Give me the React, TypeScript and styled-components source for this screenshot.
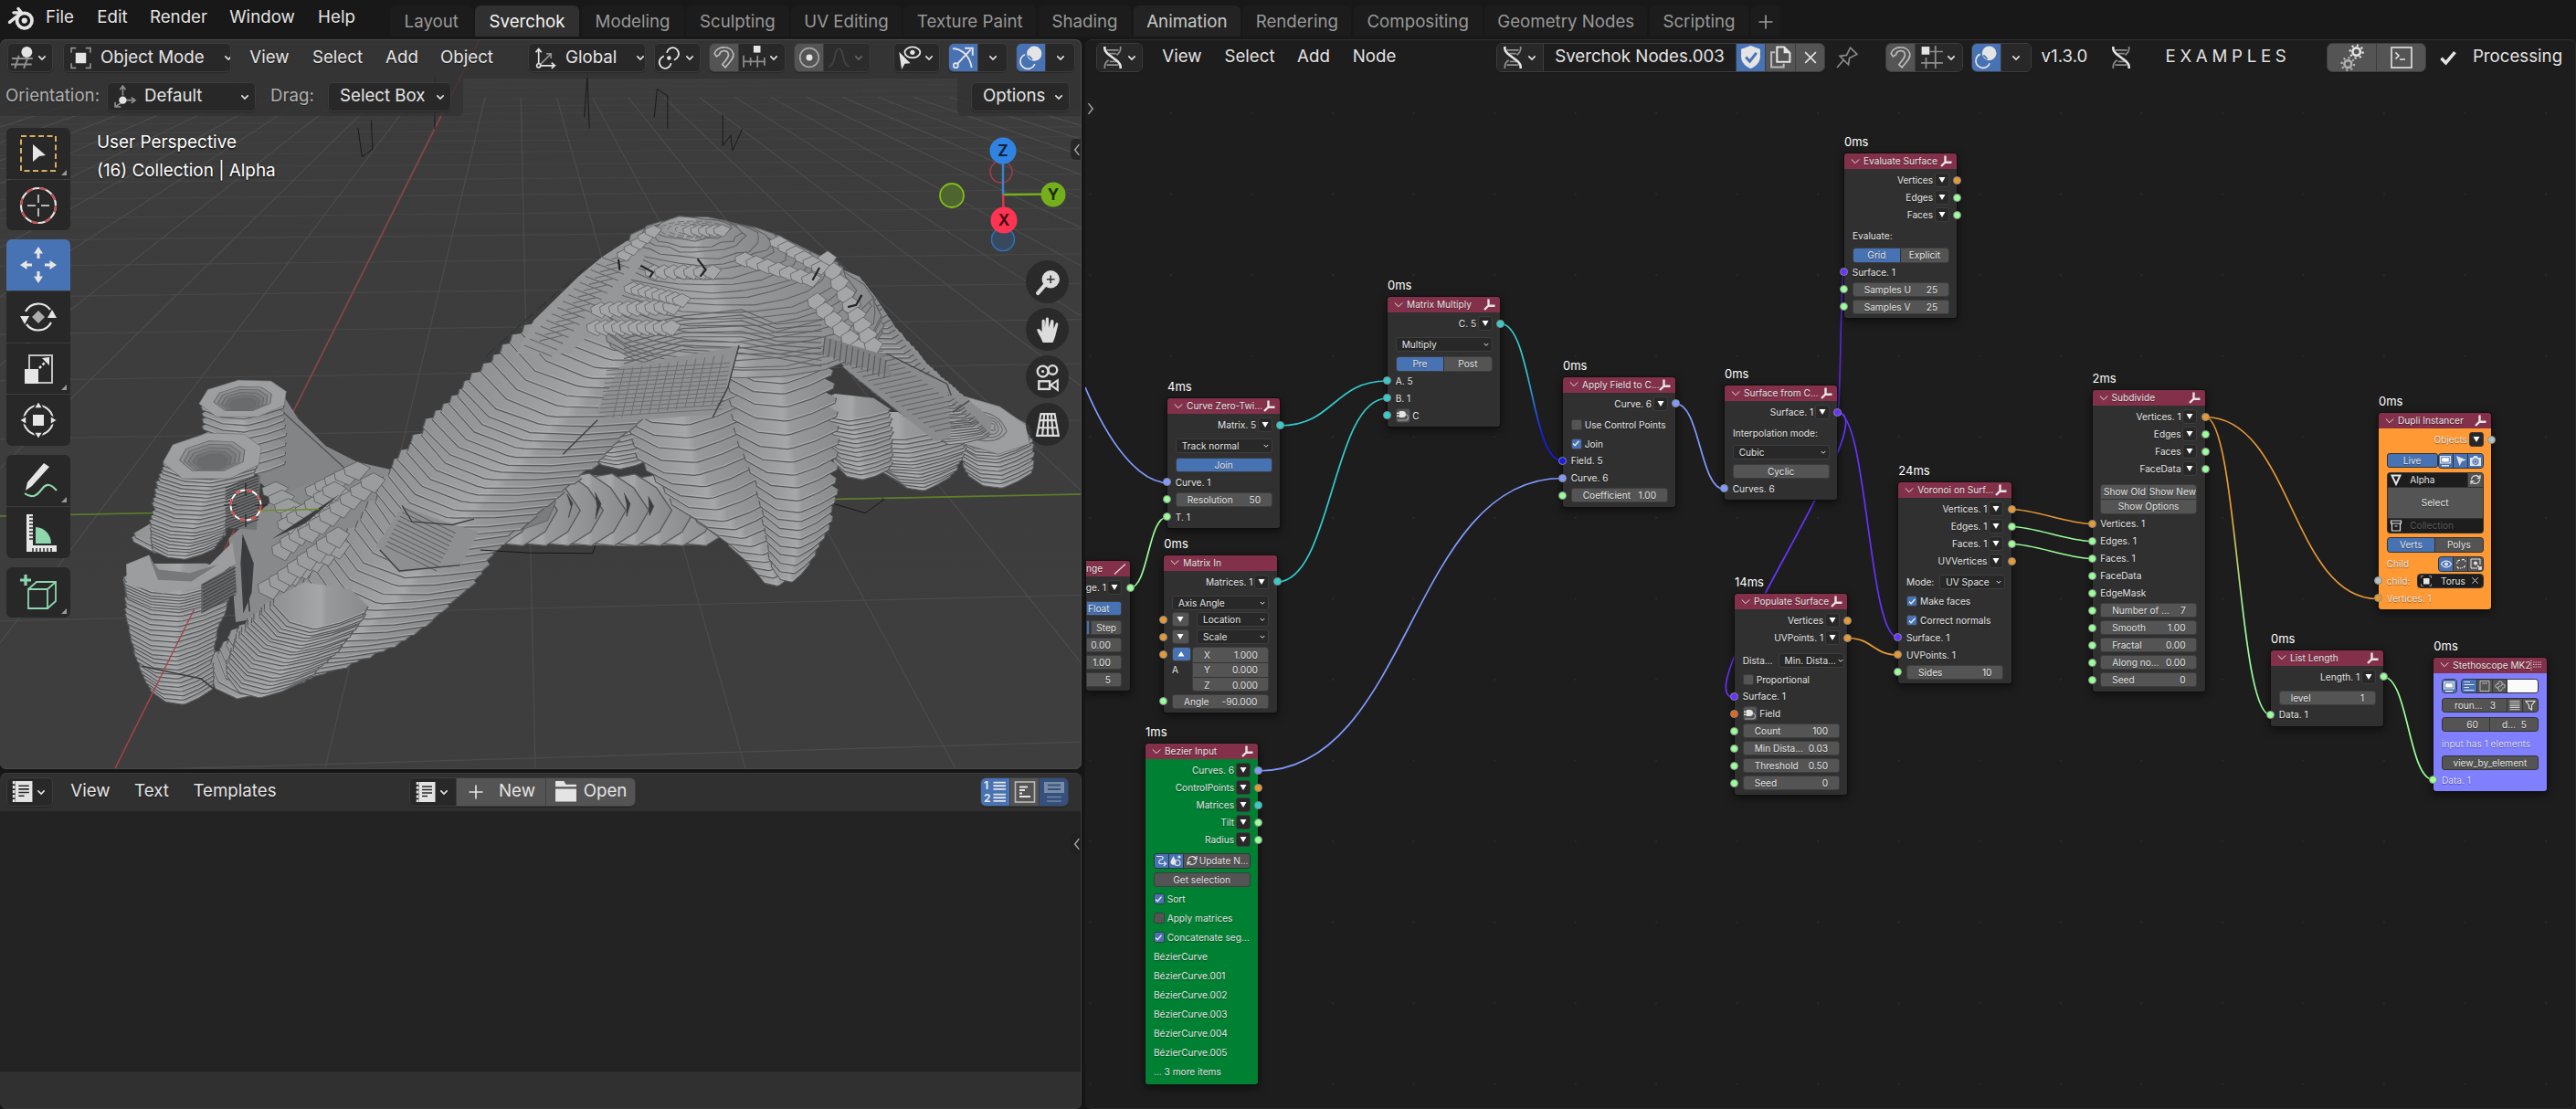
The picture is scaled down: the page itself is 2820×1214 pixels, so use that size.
import React from 'react';
import styled, { createGlobalStyle, css } from 'styled-components';

const C = {
  blue: '#4772b3', gray: '#545454', dark: '#282828', line: '#3d3d3d', text: '#e4e4e4',
  vert: '#e69932', str: '#99ff99', mat: '#33cccc', curve: '#8099ff', surf: '#6633ff',
  field: '#1a1ae6', sfield: '#e66619', obj: '#b4bfbf',
};

const Global = createGlobalStyle`
  html, body { margin: 0; background: #181818; }
  body { width: 2820px; height: 1214px; overflow: hidden; }
  * { box-sizing: border-box; }
  #root { font-family: Inter, "Noto Sans", sans-serif; font-size: 18.700px; color: ${C.text}; line-height: 1; }
`;

/* ---------- icons ---------- */
const Svg = styled.svg<{ $s?: number }>`
  width: ${p => p.$s ?? 26}px;
  height: ${p => p.$s ?? 26}px;
  flex: none;
  display: block;
  fill: none;
  stroke: currentColor;
  stroke-width: 1.6;
  overflow: visible;
`;
const F = { fill: 'currentColor', stroke: 'none' };
const D = { opacity: 0.55 };

const glyphs: Record<string, React.ReactNode> = {
  logo: <><path d="M2 15.5L12.5 7H5.5M12.5 7L9.5 3.5" strokeWidth="2.6" strokeLinecap="round" strokeLinejoin="round" /><circle cx="15" cy="14" r="6.6" strokeWidth="3" /><circle cx="15" cy="14" r="2.5" {...F} /></>,
  view3d: <><g {...D}><path d="M1 13h21M0 19h21M8 10L4 23M17 12l-4 11" strokeWidth="1.8" /></g><circle cx="16" cy="6.5" r="5.5" {...F} /></>,
  objmode: <><rect x="6.5" y="6.5" width="11" height="11" {...F} /><path {...D} d="M2 6.500V1.500H7M17 1.500H22V6.500M22 17.500V22.500H17M7 22.500H2V17.500" /></>,
  axes: <><path d="M4.500 20V3M1.500 6l3-3.500 3 3.500M4.500 20H21M18 17l3.500 3-3.500 3" /><path {...D} d="M5 20L17 8M12.500 7.500H17.500V12.500" /><circle cx="4.500" cy="20" r="2" fill="#282828" /></>,
  pivot: <><circle cx="11" cy="12" r="2" {...F} /><path d="M9 7C10 2 16 0 19 4s1 8-3 10M13 17c-1 5-7 7-10 3s-1-8 3-10" /></>,
  magnet: <path {...D} opacity={0.7} d="M2 8C4 0 18-1 21 8c1 4-3 8-8 14l-3-3c4-5 7-8 6-11-1-4-8-4-9 1l-3 2z" />,
  incr: <><rect x="11" y="0" width="7" height="7" {...F} /><path {...D} d="M1 10v12M8 12v8M15 10v12M22 12v8M1 16h22" /></>,
  prop: <><circle {...D} cx="12" cy="12" r="9.500" /><circle cx="12" cy="12" r="3.200" {...F} /></>,
  falloff: <path {...D} opacity={0.4} d="M1 21C9 20 6 3 11.500 3S14 20 22 21" />,
  visib: <><ellipse cx="15" cy="6.500" rx="7.500" ry="5.200" /><circle cx="15" cy="6.500" r="2.300" {...F} /><path d="M2 6l11 11-5.500.5L4.500 23z" {...F} /></>,
  gizmo: <><path d="M1 3C10 3 18 10 20 22M5 19L19 4M13 2.500h8V10" strokeWidth="1.8" /><circle cx="4" cy="20" r="2.300" /></>,
  overlay: <><circle cx="15" cy="8" r="7.500" {...F} /><path d="M5.500 9A7.500 7.500 0 1 0 15.500 18.500" /><path d="M9 10l4 4" stroke="#4772b3" /></>,
  chev: <path d="M6.500 9.500l5.500 5.500 5.500-5.500" strokeWidth="2.400" />,
  dna: <><path {...D} d="M20 1v2c0 3-2 5-4 6.500M4 23v-2c0-3 2-5 4-6.500M6 4.500h12M8.500 8h7M9 16h7M6 19.500h12" /><path d="M4 1v2c0 7 16 11 16 18v2" strokeWidth="2.400" /></>,
  shield: <><path d="M12 0l10 3.500v8C22 18 17 22 12 24 7 22 2 18 2 11.500v-8z" {...F} /><path d="M7 12l4 4.500 7-9" stroke="#4772b3" strokeWidth="2.800" /></>,
  copy: <><path {...D} opacity={0.7} d="M6 7H2v15.500h13V19" strokeWidth="2" /><path d="M8 1.500h7.500l6 6V17H8z" strokeWidth="2" /><path d="M15 1.500V8h6.500z" {...F} /></>,
  x: <path d="M5 5l14 14M19 5L5 19" strokeWidth="2" />,
  pin: <path {...D} d="M1 23l7-8-4-4 7-1 4-8 7 7-8 4-1 7-5-5" />,
  gridsnap: <><rect x="1.500" y="1" width="8" height="8" {...F} /><path {...D} d="M15.500 0v23M1 17.500h22M6 12v11M10 6h13" /></>,
  gears: <><circle cx="16" cy="6.500" r="3.600" strokeWidth="2.200" /><circle cx="16" cy="6.500" r="6" strokeWidth="2" strokeDasharray="1.800 2.900" /><g opacity=".65"><circle cx="8" cy="18" r="3.300" strokeWidth="2.200" /><circle cx="8" cy="18" r="5.800" strokeWidth="2" strokeDasharray="1.800 2.750" /></g></>,
  console: <><rect x="1" y="1" width="22" height="22" /><path d="M5.500 6.500l3.500 3.500-3.500 3.500M10 14h6" /></>,
  check: <path d="M3 13l6 6L21 5" strokeWidth="4.200" />,
  textfile: <><rect x="4.500" y="1" width="18" height="22" {...F} /><path d="M3 1v22" strokeDasharray="3 1.800" strokeWidth="2.500" /><path d="M8 6h11M8 9.500h11M8 13h11M8 16.500h6" stroke="#282828" strokeWidth="1.500" /></>,
  plus: <path d="M12 3v18M3 12h18" strokeWidth="2" />,
  folder: <><path d="M1 1h9l2 3.500h11V7H1zM1 9h22v13.500H1z" {...F} /></>,
  linenum: <><text x="0" y="10" fontSize="11.500" fontWeight="700" {...F}>1</text><text x="0" y="23" fontSize="11.500" fontWeight="700" {...F}>2</text><path d="M10 2.500h13M10 6h13M10 9.500h13M10 15h13M10 18.500h13M10 22h13" strokeWidth="1.800" /></>,
  wrap: <><rect x="1.500" y="1" width="21" height="22" opacity=".7" /><path d="M6 6.500h9M6 10h6M6 13.500h3M6 17h12" strokeWidth="1.800" /></>,
  syntax: <><path d="M1 1h22v12H1z" {...F} opacity=".4" /><path d="M5 4.500h14M5 9h14" stroke="#35507c" strokeWidth="1.800" /><path d="M4 17.500h16M4 22h16" opacity=".35" /></>,
  default: <><g {...D}><path d="M10 11V2M7 5l3-4 3 4M13 16h9M19 13l4 3-4 3M8 19l-6 4M2 18v5h6" /></g><circle cx="10" cy="16" r="4" {...F} /></>,
};
const Icon = ({ n, s }: { n: string; s?: number }) => <Svg $s={s} viewBox="0 0 24 24">{glyphs[n]}</Svg>;

/* ---------- header widgets ---------- */
const Bar = styled.div<{ $h: number; $bg?: string; $pb?: number }>`
  display: flex;
  align-items: center;
  height: ${p => p.$h}px;
  padding-bottom: ${p => p.$pb ?? 0}px;
  background: ${p => p.$bg ?? 'transparent'};
  position: relative;
`;
const Label = styled.div<{ $w: number; $ml?: number; $c?: string; $ls?: number }>`
  width: ${p => p.$w}px;
  margin-left: ${p => p.$ml ?? 0}px;
  color: ${p => p.$c ?? C.text};
  letter-spacing: ${p => p.$ls ?? 0}px;
  display: flex;
  justify-content: center;
  flex: none;
  white-space: nowrap;
  text-shadow: 0 1px 1px rgba(0, 0, 0, 0.45);
`;
const Group = styled.div<{ $ml?: number }>`
  display: flex;
  flex: none;
  height: 32px;
  margin-left: ${p => p.$ml ?? 0}px;
  border: 1px solid ${C.line};
  border-radius: 6px;
  overflow: hidden;
  box-shadow: 0 1px 1px rgba(0, 0, 0, 0.25);
`;
const Cell = styled.div<{ $w: number; $bg?: string; $gap?: number; $left?: boolean; $dim?: boolean }>`
  width: ${p => p.$w}px;
  height: 100%;
  display: flex;
  align-items: center;
  justify-content: ${p => (p.$left ? 'flex-start' : 'center')};
  padding: ${p => (p.$left ? '0 3px 0 6px' : '0')};
  gap: ${p => p.$gap ?? 0}px;
  background: ${p => p.$bg ?? C.dark};
  color: ${p => (p.$dim ? '#6a6a6a' : C.text)};
  white-space: nowrap;
  & + & { border-left: 1px solid ${C.line}; }
`;
const Grow = styled.span`flex: 1;`;
const Indent = styled.span`width: 6px;`;

const IconMenu = ({ n, ml, s = 26 }: { n: string; ml: number; s?: number }) => (
  <Group $ml={ml}><Cell $w={49}><Icon n={n} s={s} /><Icon n="chev" s={16} /></Cell></Group>
);
const Drop = ({ icon, label, w, ml, gap = 9 }: { icon?: string; label: string; w: number; ml: number; gap?: number }) => (
  <Group $ml={ml}>
    <Cell $w={w - 2} $left $gap={icon ? gap : 0}>
      {icon ? <Icon n={icon} s={25} /> : <Indent />}<span>{label}</span><Grow /><Icon n="chev" s={16} />
    </Cell>
  </Group>
);

/* ---------- top bar ---------- */
const Top = styled.div`
  display: flex;
  height: 43px;
  background: #181818;
`;
const Menus = styled.div`
  display: flex;
  align-items: center;
  height: 39px;
  width: 427px;
  padding-left: 8px;
`;
const Tabs = styled.div`
  display: flex;
  gap: 2.300px;
  padding-top: 6px;
  height: 40px;
`;
const Tab = styled.div<{ $w: number; $on?: boolean; $hover?: boolean }>`
  width: ${p => p.$w}px;
  display: flex;
  align-items: center;
  justify-content: center;
  padding-top: 2px;
  border-radius: 6px 6px 0 0;
  background: ${p => (p.$on ? '#303030' : p.$hover ? '#232323' : '#1c1c1c')};
  color: ${p => (p.$on ? '#f4f4f4' : p.$hover ? '#c8c8c8' : '#989898')};
`;
const tabs: [string, number][] = [['Layout', 90.500], ['Sverchok', 114.500], ['Modeling', 112], ['Sculpting', 113], ['UV Editing', 120.500], ['Texture Paint', 145.500], ['Shading', 101.500], ['Animation', 117.500], ['Rendering', 119], ['Compositing', 141], ['Geometry Nodes', 178.500], ['Scripting', 108.500]];

/* ---------- areas ---------- */
const Screen = styled.div`
  width: 2820px;
  height: 1214px;
  background: #161616;
  overflow: hidden;
`;
const Main = styled.div`
  display: grid;
  grid-template-columns: 1184px 1632px;
  column-gap: 4px;
  height: 1171px;
`;
const LeftCol = styled.div`
  display: grid;
  grid-template-rows: 799px 368px;
  row-gap: 4px;
`;
const area = css`
  position: relative;
  overflow: hidden;
  border-radius: 7px;
`;
const Edge = styled.div<{ $c: string }>`
  position: absolute;
  inset: 0;
  border-radius: 7px;
  border: 1px solid ${p => p.$c};
  border-left: 0;
  pointer-events: none;
`;

/* ---------- 3D scene ---------- */
const Viewport = styled.section`${area} background: #3d3d3d;`;
const SceneSvg = styled.svg`
  position: absolute;
  inset: 0;
  width: 1184px;
  height: 799px;
`;

const rng = (seed: number) => () => {
  seed = (seed * 16807) % 2147483647;
  return seed / 2147483647;
};

type Pt = [number, number, number];
interface TubeSpec { spine: Pt[]; n: number; d?: number; rot?: number; seed?: number; fill?: string; jit?: number; round?: number }

const lerpSpine = (s: Pt[], t: number): Pt => {
  const f = t * (s.length - 1);
  const i = Math.min(s.length - 2, Math.floor(f));
  const k = f - i;
  return [0, 1, 2].map(j => s[i][j] + (s[i + 1][j] - s[i][j]) * k) as Pt;
};

const chevronShape = [[-1, -0.85], [-0.96, -0.62], [-0.5, -0.1], [0.02, 0], [0.12, -0.02], [0.55, -0.32], [0.97, -0.74], [1, -0.95], [0.5, -1.5], [-0.5, -1.5]];
const roundShape = Array.from({ length: 20 }, (_, i) => {
  const a = (i / 20) * Math.PI * 2;
  return [Math.cos(a), Math.sin(a)];
});

/* A stack of slabs laid along a spine, each upper slab covering the one below. */
const Tube = ({ spine, n, d = 50, rot = 0, seed = 7, fill = 'url(#slab)', jit = 2, round }: TubeSpec) => {
  const r = rng(seed);
  const a = (rot * Math.PI) / 180;
  const shape = round ? roundShape : chevronShape;
  const out: React.ReactNode[] = [];
  for (let i = n - 1; i >= 0; i--) {
    const [x, y, w] = lerpSpine(spine, i / (n - 1));
    const ww = w + (r() - 0.5) * jit * 2;
    const p = shape.map(([u, v]) => {
      const px = u * ww + (round ? (r() - 0.5) * jit : 0);
      const py = v * (round ? w * round : d) + (r() - 0.5) * jit;
      return [x + px * Math.cos(a) - py * Math.sin(a), y + px * Math.sin(a) + py * Math.cos(a)];
    });
    const str = (q: number[][]) => q.map(e => `${e[0].toFixed(1)},${e[1].toFixed(1)}`).join(' ');
    out.push(
      <g key={i}>
        <polygon points={str(p)} fill={fill} stroke={round ? '#606264' : 'none'} strokeWidth="1.1" vectorEffect="non-scaling-stroke" />
        {!round && <polyline points={str(p.slice(0, 8))} fill="none" stroke="#58595b" strokeWidth="1.2" vectorEffect="non-scaling-stroke" />}
        {!round && <polyline points={str(p.slice(1, 7).map(([X, Y]) => [X, Y - 3.2]))} fill="none" stroke="#b2b4b5" strokeWidth=".7" vectorEffect="non-scaling-stroke" />}
      </g>,
    );
  }
  return <g>{out}</g>;
};

const Ring = ({ x, y, rx, ry, steps = 5 }: { x: number; y: number; rx: number; ry: number; steps?: number }) => {
  const hex = (k: number, dy: number) =>
    [[-1, 0.25], [-0.8, -0.5], [-0.1, -1], [0.65, -0.95], [1, -0.4], [0.95, 0.35], [0.35, 0.95], [-0.6, 0.95]]
      .map(([u, v]) => `${x + u * rx * k},${y + dy + v * ry * k}`).join(' ');
  return (
    <g stroke="#66686a">
      <polygon points={hex(1, 0)} fill="#9d9fa0" strokeWidth="1" />
      {Array.from({ length: steps }, (_, i) => (
        <polygon key={i} points={hex(0.66 - i * 0.09, i * 3)} fill={['#8d8f90', '#828485', '#7a7c7d', '#707273', '#696b6c'][i % 5]} strokeWidth="1.500" />
      ))}
    </g>
  );
};

const hatch = (x0: number, y0: number, dx: number, dy: number, lx: number, ly: number, n: number) =>
  Array.from({ length: n }, (_, i) => `M${x0 + dx * i},${y0 + dy * i}l${lx},${ly}`).join('');

const patch = (x: number, y: number, cols: number, w: number, h: number, sx: number, sy: number) =>
  Array.from({ length: cols }, (_, i) => {
    const a = x + i * sx;
    const b = y + i * sy;
    return <path key={i} d={`M${a},${b}l${w},${-h / 2}l${w * 0.9},${h / 2}l${-w * 0.8},${h}l${-w},${-h * 0.45}z`} />;
  });

const Model = () => (
  <g transform="translate(0,130) scale(0.75895,0.45918)">
    {/* arm reaching to the right with its two feet */}
    <polygon points="1366,650 1400,666 1442,686 1480,730 1484,790 1400,820 1340,760" fill="#98999b" />
    <Tube spine={[[1432, 775, 54], [1436, 820, 54], [1442, 880, 49]]} n={13} d={46} seed={3} />
    <path d="M1366,650L1400,666L1442,686L1480,730L1485,775L1440,800L1380,770Z" fill="#9c9e9f" stroke="#606264" />
    {[0, 1, 2, 3].map(i => <path key={i} d={`M${1392 + i * 9},${700 + i * 8}Q${1440},${690 + i * 12} ${1452 - i * 6},${745 - i * 3}Q1440,${780 - i * 10} ${1400 + i * 8},${762 - i * 8}Z`} fill="none" stroke="#6c6e70" strokeWidth="1.200" vectorEffect="non-scaling-stroke" />)}
    <Tube spine={[[1295, 765, 98], [1310, 815, 84], [1322, 850, 66], [1330, 886, 44]]} n={15} d={44} seed={22} />
    <Tube spine={[[1222, 720, 58], [1232, 790, 50], [1240, 860, 40]]} n={14} d={40} rot={10} seed={21} />
    <Tube spine={[[1150, 420, 100], [1205, 540, 88], [1260, 640, 82], [1315, 715, 70], [1365, 775, 42]]} n={38} d={58} rot={34} seed={12} />
    <polygon points="1275,560 1366,634 1372,760 1350,770 1290,690 1215,590" fill="#898b8d" />
    <path d={hatch(1212, 575, 8, 10, 62, -22, 18)} stroke="#626466" strokeWidth="1.100" vectorEffect="non-scaling-stroke" />
    <path d="M1279,560L1366,632L1372,660M1374,700L1398,672" stroke="#4a4b4c" fill="none" strokeWidth="1.500" vectorEffect="non-scaling-stroke" />

    {/* lower strut */}
    <polygon points="640,990 700,930 770,852 860,850 928,862 1020,900 1020,1015 900,1018 700,1012" fill="#8f9193" />
    <Tube spine={[[860, 765, 60], [878, 800, 60], [890, 834, 48]]} n={8} d={40} rot={10} seed={18} />
    {Array.from({ length: 10 }, (_, i) => {
      const x = 1020 - i * 33;
      return (
        <polygon key={i} stroke="#56585a" strokeWidth="1.300" vectorEffect="non-scaling-stroke" fill="url(#slab)" points={`${x - 46},${862 - i} ${x - 5},${850 - i} ${x + 26},${880} ${x + 48},${934} ${x + 30},${985} ${x - 2},${1018} ${x - 38},${1012} ${x - 62},${975} ${x - 22},${975} ${x + 2},${935} ${x - 18},${888}`} />
      );
    })}
    <path d="M752,905l28,-20l22,28l-12,45l-38,22l-22,-30z" fill="#7a7c7e" stroke="#4c4e50" />
    <g fill="#9fa1a2" stroke="#555">{patch(735, 925, 3, 16, 26, 14, -6)}</g>
    <path d="M818,895l8,22l-6,34l4,-26zM858,890l9,28l-8,36l2,-28M900,892l9,26l-5,30l0,-26M935,900l8,24l-6,22l-1,-20" fill="#3c3e40" stroke="#3c3e40" />

    {/* front legs */}
    <Tube spine={[[985, 610, 95], [985, 730, 90], [1000, 850, 85], [1040, 960, 72], [1095, 1040, 55], [1120, 1113, 36]]} n={21} d={64} seed={41} />
    <Tube spine={[[1125, 560, 74], [1125, 660, 78], [1135, 800, 74], [1150, 930, 58], [1150, 1020, 48], [1140, 1105, 30]]} n={22} d={58} seed={53} />

    {/* thin web behind the two posts */}
    <polygon points="405,650 430,715 470,780 520,822 480,900 420,930 370,860 380,700" fill="#828486" />
    <path d={hatch(402, 690, 6, 9, 30, 45, 16)} stroke="#4e5052" strokeWidth="1.200" vectorEffect="non-scaling-stroke" />
    <polygon points="400,900 520,820 600,850 560,1060 480,1160 340,1200 330,1000" fill="#88898b" />

    {/* main leg */}
    <Tube spine={[[925, 490, 95], [850, 600, 128], [775, 725, 134], [715, 825, 134], [655, 925, 124], [600, 1030, 108], [545, 1145, 108], [480, 1245, 106], [395, 1320, 96], [335, 1380, 66]]} n={50} d={84} rot={25} seed={77} jit={4} />
    <Tube spine={[[450, 1215, 70], [410, 1290, 78], [372, 1380, 60]]} n={20} d={70} rot={12} seed={78} jit={3} />
    <polygon points="580,925 650,965 690,985 665,1065 575,1082 542,1020" fill="#8d8f91" />
    <path d={hatch(583, 928, -3, 10, 74, 60, 10)} stroke="#636567" strokeWidth="1.200" vectorEffect="non-scaling-stroke" />
    <path d="M580,922l14,38l58,8l32,-14M548,1028l28,50l88,-14" fill="none" stroke="#3c3e40" strokeWidth="1.300" vectorEffect="non-scaling-stroke" />

    {/* inner shards between posts and leg */}
    <g fill="#9a9c9d" stroke="#55575a" strokeWidth="1.300">
      {patch(378, 880, 5, 20, 30, 9, 20)}
      {patch(392, 1020, 8, 18, 34, 12, -18)}
      {patch(372, 1110, 7, 20, 36, 16, -16)}
      {patch(440, 880, 5, 20, 30, 14, -12)}
      {patch(430, 980, 7, 19, 32, 15, -20)}
      {patch(400, 960, 6, 18, 30, 13, -16)}
      {patch(400, 1080, 6, 18, 34, 14, -18)}
    </g>
    <path d="M490,895L392,1002L440,965ZM350,990l16,70l-3,70l-12,50l-4,-120z" fill="#3a3c3f" />

    {/* hump: terraced contours */}
    <Tube spine={[[1000, 262, 50], [1010, 296, 100], [1028, 340, 148], [1046, 392, 180], [1064, 455, 200], [1072, 505, 206]]} n={22} seed={91} jit={9} round={0.54} />
    <path d="M868,330L905,290L930,330L880,470L820,560L745,560L770,480L835,375Z" fill="#959799" />
    <path d={hatch(868, 330, -8, 15, 40, 26, 15) + hatch(890, 320, -8, 15, 34, -14, 15)} stroke="#66686a" strokeWidth="1.100" vectorEffect="non-scaling-stroke" />
    {Array.from({ length: 4 }, (_, i) => (
      <ellipse key={i} cx={1000} cy={264} rx={48 - i * 11} ry={20 - i * 4} fill="none" stroke="#6c6e70" strokeDasharray="7 3" vectorEffect="non-scaling-stroke" />
    ))}
    {Array.from({ length: 9 }, (_, i) => (
      <path key={i} d={`M${900},${500 + i * 12}L${985},${470 + i * 10}L${1070},${455 + i * 13}L${1120},${490 + i * 10}L${1185},${478 + i * 14}`} fill="none" stroke="#5f6163" strokeWidth="1.200" vectorEffect="non-scaling-stroke" />
    ))}
    <g fill="#a4a6a7" stroke="#5d5f61" strokeWidth="1.300">
      {patch(985, 262, 5, 13, 20, 11, 0)}
      {patch(930, 360, 7, 14, 24, 14, 0)}
      {patch(852, 450, 9, 15, 26, 13, -1)}
      {patch(846, 492, 10, 15, 26, 12, 0)}
      {patch(890, 320, 5, 13, 20, 10, -14)}
      {patch(900, 400, 8, 14, 22, 10, 4)}
      {patch(1060, 330, 7, 15, 24, 16, 8)}
      {patch(1180, 330, 5, 14, 30, 9, 28)}
      {patch(1165, 430, 6, 14, 30, 12, 22)}
      {patch(1215, 440, 5, 14, 30, 8, 24)}
      {patch(1110, 290, 6, 14, 22, 12, 12)}
    </g>
    <path d="M892,335l2,26M924,350l18,16l-5,12M1006,334l12,26l-8,16M1182,355l-10,30M1243,420l-8,24l-12,5" fill="none" stroke="#232323" strokeWidth="2.200" vectorEffect="non-scaling-stroke" />
    <polygon points="895,590 1065,542 1050,640 1025,705 900,720 860,700" fill="#8e9092" />
    <path d={hatch(875, 600, -1, 10, 178, -18, 12) + hatch(900, 596, 13, -3, -16, 118, 12)} stroke="#6b6d6f" strokeWidth="1" vectorEffect="non-scaling-stroke" />
    <path d="M1066,540L1050,640L1028,712M862,718L812,800" stroke="#3e4041" strokeWidth="1.400" fill="none" vectorEffect="non-scaling-stroke" />
    <polygon points="1190,520 1270,560 1290,615 1240,590 1185,560" fill="#7f8183" />
    <path d={hatch(1190, 520, 8, 5, -3, 44, 12)} stroke="#585a5c" strokeWidth="1.200" vectorEffect="non-scaling-stroke" />
    <path d="M700,568L760,477L848,350" stroke="#333" strokeWidth="1.300" strokeDasharray="14 5" fill="none" vectorEffect="non-scaling-stroke" />

    {/* left posts */}
    <Tube spine={[[350, 715, 60], [352, 770, 62], [356, 850, 58]]} n={8} d={34} seed={31} />
    <Ring x={350} y={668} rx={63} ry={45} />
    <Tube spine={[[260, 1030, 66], [256, 1040, 68]]} n={2} d={50} seed={36} />
    <Tube spine={[[306, 842, 70], [292, 910, 68], [275, 990, 58], [265, 1050, 48]]} n={24} d={34} seed={33} />
    <Ring x={306} y={805} rx={71} ry={56} />
    <polygon points="345,860 376,850 370,980 322,975" fill="#707274" />
    <path d={hatch(325, 880, 0, 7, 48, -30, 16)} stroke="#3f4143" strokeWidth="1.300" vectorEffect="non-scaling-stroke" />
    <Tube spine={[[258, 1135, 79], [256, 1180, 77], [250, 1260, 66], [252, 1330, 54], [262, 1396, 48]]} n={27} d={50} seed={35} />
    <polygon points="182,1062 215,1040 232,1095 280,1100 335,1010 340,1060 290,1115 235,1132 183,1110" fill="#9b9d9e" />
    <path d="M215,1045l14,30l45,8l40,-20l-38,40l-48,-4z" fill="#76787a" />
    <polygon points="290,1110 338,1065 342,1130 290,1180" fill="#68696b" />
    <path d={hatch(292, 1112, 0, 8, 48, -42, 9)} stroke="#3f4143" strokeWidth="1.200" vectorEffect="non-scaling-stroke" />
    <path d="M205,1305L290,1335L320,1375M360,1175L350,1000" fill="none" stroke="#3a3b3c" strokeWidth="1.600" vectorEffect="non-scaling-stroke" />

    <path d="M280,1170L166,1549" stroke="#a3404b" strokeWidth="1.300" vectorEffect="non-scaling-stroke" />
    <path d="M370,934L460,931" stroke="#6a8c2a" strokeWidth="1.300" vectorEffect="non-scaling-stroke" />
    <path d="M693,1028L765,1035L855,1036L859,1016M1203,918L1248,940L1275,908L1272,903" stroke="#181818" fill="none" vectorEffect="non-scaling-stroke" />
  </g>
);

const Floor = () => {
  const H = -60;
  const rows = Array.from({ length: 24 }, (_, i) => H + 1 / (0.0011025 + 0.000249 * i));
  return (
    <g stroke="#4b4b4b" strokeWidth="1.300">
      {rows.map((y, i) => <line key={i} x1="0" y1={y} x2="1184" y2={H + (y - H) * (1 - 3.25e-5 * 1184)} opacity={Math.max(0.25, 1 - i * 0.04)} />)}
      {Array.from({ length: 31 }, (_, i) => {
        const k = i - 14;
        const x = 126 + 230 * k;
        return <line key={i} x1={x} y1="841" x2={567 + (x - 567) * 0.17} y2={-44 + 885 * 0.17} />;
      })}
      <line x1="126" y1="841" x2="525" y2="43" stroke="#97404a" />
      <line x1="0" y1="565" x2="1184" y2="541" stroke="#5f7f26" strokeWidth="1.600" />
    </g>
  );
};

const Scene = () => (
  <SceneSvg viewBox="0 43 1184 799">
    <defs>
      <linearGradient id="slab" x1="0" y1="0" x2="1" y2="0">
        <stop offset="0" stopColor="#8f9192" /><stop offset=".3" stopColor="#9b9d9e" />
        <stop offset=".5" stopColor="#a5a7a8" /><stop offset=".56" stopColor="#98999b" /><stop offset="1" stopColor="#888a8c" />
      </linearGradient>
      <linearGradient id="bg" x1="0" y1="0" x2="0" y2="1"><stop offset="0" stopColor="#3c3c3c" /><stop offset="1" stopColor="#3e3e3e" /></linearGradient>
    </defs>
    <rect y="43" width="1184" height="799" fill="url(#bg)" />
    <Floor />
    <g transform="scale(.7653,.3333)" fill="none" stroke="#1a1a1a">
      <path vectorEffect="non-scaling-stroke" d="M512,420L518,515L533,490L531,395M622,245V425M836,385L840,245L843,422M936,385L940,292L955,315V422M1034,378V478L1045,445L1048,495L1062,422" />
    </g>
    <Model />
    <circle cx="269" cy="553" r="16.500" fill="none" stroke="#fff" strokeWidth="1.800" />
    <circle cx="269" cy="553" r="16.500" fill="none" stroke="#e23b3b" strokeWidth="1.800" strokeDasharray="6.500 6.500" />
    <path d="M269,529v14M269,563v14M245,553h14M279,553h14" stroke="#222" strokeWidth="1.200" />
  </SceneSvg>
);

const Tools = styled.div`
  display: flex;
  flex-direction: column;
  gap: 10px;
  padding: 13px 0 0 7px;
`;
const ToolBlock = styled.div`
  display: flex;
  flex-direction: column;
  gap: 1px;
  border-radius: 6px;
  overflow: hidden;
`;
const Tool = styled.div<{ $on?: boolean }>`
  width: 70px;
  height: 55.700px;
  display: flex;
  align-items: center;
  justify-content: center;
  background: ${p => (p.$on ? C.blue : '#282828')};
  color: #e6e6e6;
  position: relative;
`;
const Corner = styled.i`
  position: absolute;
  right: 4px;
  bottom: 4px;
  border-left: 6px solid transparent;
  border-bottom: 6px solid #9a9a9a;
`;
const toolGlyphs: Record<string, React.ReactNode> = {
  select: <><rect x="1" y="1" width="38" height="38" stroke="#d9ae62" strokeWidth="2" strokeDasharray="6 3.500" /><path d="M14 10l14 12-7 1-7 6z" {...F} /></>,
  cursor: <><circle cx="20" cy="20" r="19" strokeWidth="2.200" /><circle cx="20" cy="20" r="19" stroke="#c5504f" strokeWidth="2.200" strokeDasharray="7.500 7.500" /><path d="M20 8v9M20 23v9M8 20h9M23 20h9" strokeWidth="1.500" /></>,
  move: <><path d="M20 13v-6M20 27v6M13 20H7M27 20h6" strokeWidth="3" /><path d="M20 0l5 7.500H15zM20 40l5-7.500H15zM0 20l7.500-5v10zM40 20l-7.500-5v10z" {...F} /></>,
  rotate: <><path d="M6 14A16 16 0 0 1 33 12M34 26A16 16 0 0 1 7 28" strokeWidth="2.200" /><path d="M35 12l5 9H30zM5 28L0 19h10z" {...F} /><path d="M20 13l7 7-7 7-7-7z" {...F} opacity=".7" /></>,
  scale: <><path d="M10 20V5h25v30H20" strokeWidth="2" opacity=".8" /><rect x="5" y="20" width="15" height="16" {...F} /><path d="M21 19L30 10" strokeDasharray="3 2" strokeWidth="2.500" /><path d="M32 7v9l-8-8z" {...F} /></>,
  transform: <><circle cx="20" cy="20" r="16" strokeWidth="2" /><rect x="13" y="13" width="14" height="14" {...F} stroke="#282828" strokeWidth="2" /><path d="M20-1l5 8H15zM20 41l5-8H15zM-1 20l8-5v10zM41 20l-8-5v10z" {...F} stroke="#282828" /></>,
  annotate: <><path d="M26 1l6 4L13 26l-7 5 2-9z" {...F} /><path d="M5 34c10 8 16-1 20-6s9-4 15 3" stroke="#8ed6ae" strokeWidth="2.200" /></>,
  measure: <><path d="M7 0h7v39H7z" {...F} /><path d="M7 34h33v7H7z" {...F} /><path d="M10 3h4M10 7h4M10 11h4M10 15h4M10 19h4M10 23h4M10 27h4M14 37v4M18 37v4M22 37v4M26 37v4M30 37v4M34 37v4" stroke="#282828" strokeWidth="1.500" /><path d="M17 14a18 18 0 0 1 17 18H17z" fill="#8ed6ae" stroke="none" /></>,
  cube: <g stroke="#8ed6ae" strokeWidth="1.800"><path d="M9 17h21v21H9zM9 17l9-8h21v21l-9 8M30 17l9-8" /><path d="M0 7h12M6 1v12" strokeWidth="3.200" /></g>,
};
const toolBlocks: [string, boolean][][] = [
  [['select', true], ['cursor', false]],
  [['move', false], ['rotate', false], ['scale', true], ['transform', false]],
  [['annotate', true], ['measure', false]],
  [['cube', true]],
];
const VBody = styled.div`
  position: relative;
  display: flex;
  height: 715px;
`;
const Overlay = styled.div`
  margin: 13px 0 0 29px;
  line-height: 31px;
  font-size: 18.900px;
  color: #fff;
  text-shadow: 0 1px 2px #000;
  white-space: pre;
`;
const NavCol = styled.div`
  display: flex;
  flex-direction: column;
  align-items: flex-end;
  gap: 5px;
  padding-top: 18px;
  margin-left: auto;
`;
const Gizmo = styled.svg`
  width: 144px;
  height: 135px;
  font: 700 17px Inter, sans-serif;
  text-anchor: middle;
`;
const NavBtn = styled.div`
  width: 47px;
  height: 47px;
  border-radius: 50%;
  background: rgba(38, 38, 38, 0.8);
  display: grid;
  place-items: center;
  color: #dcdcdc;
`;
const navGlyphs: React.ReactNode[] = [
  <><circle cx="16" cy="10" r="9" {...F} /><path d="M10 16L3 24" strokeWidth="4" strokeLinecap="round" /><path d="M16 6v8M12 10h8" stroke="#333" strokeWidth="1.500" /></>,
  <path d="M8 26C6 20 3 17 2 13c1-2 3-1 5 2V4c0-2 3-2 3 0v7l1-9c0-2 3-2 3 0v9l2-7c.5-2 3-1 3 .500V12l2-5c1-2 3-1 2.500 1L21 18c-1 4-2 6-3 8z" {...F} />,
  <><circle cx="8" cy="7" r="5.500" strokeWidth="2.200" /><circle cx="18" cy="5.500" r="4.500" strokeWidth="2.200" /><circle cx="8" cy="7" r="1.500" {...F} /><rect x="4" y="17" width="11" height="8" strokeWidth="2.200" /><path d="M16 21l7-5v10z" strokeWidth="2" /></>,
  <><path d="M6 2h14l4 22H2zM13 2v22M9.500 2L7.500 24M16.500 2l2 22M5 8.500h16M4 16h18" strokeWidth="2" /></>,
];
const SideTab = styled.div<{ $mt: number; $left?: boolean }>`
  width: 12px;
  height: 23px;
  margin-top: ${p => p.$mt}px;
  margin-left: ${p => (p.$left ? 0 : 2)}px;
  border-radius: ${p => (p.$left ? '0 5px 5px 0' : '5px 0 0 5px')};
  background: rgba(32, 32, 32, 0.75);
  display: grid;
  place-items: center;
  color: #aaa;
`;
const Arrow = ({ right }: { right?: boolean }) => <Svg $s={14} viewBox="0 0 24 24"><path d={right ? 'M6 2l8 10-8 10' : 'M16 2L8 12l8 10'} strokeWidth="2.400" /></Svg>;
const SubPanel = styled.div<{ $w: number; $r?: boolean }>`
  width: ${p => p.$w}px;
  height: 41px;
  padding-bottom: 2px;
  display: flex;
  align-items: center;
  margin-left: ${p => (p.$r ? 'auto' : 0)};
  background: rgba(50, 50, 50, 0.75);
  border-radius: ${p => (p.$r ? '0 0 0 6px' : '0 0 6px 0')};
`;

const View3D = () => (
  <Viewport>
    <Scene />
    <Bar $h={43} $pb={3} $bg="rgba(50,50,50,.78)">
      <Group $ml={8}><Cell $w={48}><Icon n="view3d" /><Icon n="chev" s={16} /></Cell></Group>
      <Drop icon="objmode" label="Object Mode" w={184} ml={11} />
      <Label $w={42} $ml={21}>View</Label><Label $w={55} $ml={26}>Select</Label>
      <Label $w={36} $ml={25}>Add</Label><Label $w={58} $ml={24}>Object</Label>
      <Drop icon="axes" label="Global" w={129} ml={38} />
      <IconMenu n="pivot" ml={9} s={27} />
      <Group $ml={9}><Cell $w={31} $bg={C.gray}><Icon n="magnet" /></Cell><Cell $w={51}><Icon n="incr" /><Icon n="chev" s={16} /></Cell></Group>
      <Group $ml={9}><Cell $w={31} $bg={C.gray}><Icon n="prop" /></Cell><Cell $w={51} $bg="#2c2c2c" $dim><Icon n="falloff" /><Icon n="chev" s={16} /></Cell></Group>
      <IconMenu n="visib" ml={25} s={27} />
      <Group $ml={9}><Cell $w={31} $bg={C.blue}><Icon n="gizmo" /></Cell><Cell $w={32}><Icon n="chev" s={16} /></Cell></Group>
      <Group $ml={9}><Cell $w={31} $bg={C.blue}><Icon n="overlay" /></Cell><Cell $w={32}><Icon n="chev" s={16} /></Cell></Group>
    </Bar>
    <Bar $h={41}>
      <SubPanel $w={507}>
        <Label $w={99} $ml={8} $c="#b0b0b0">Orientation:</Label>
        <Drop icon="default" label="Default" w={163} ml={10} />
        <Label $w={46} $ml={17} $c="#b0b0b0">Drag:</Label>
        <Drop label="Select Box" w={135} ml={16} />
      </SubPanel>
      <SubPanel $w={136} $r><Drop label="Options" w={108} ml={15} /></SubPanel>
    </Bar>
    <VBody>
      <Tools>
        {toolBlocks.map((b, i) => (
          <ToolBlock key={i}>
            {b.map(([n, c]) => <Tool key={n} $on={n === 'move'}><Svg $s={40} viewBox="0 0 40 40">{toolGlyphs[n]}</Svg>{c && <Corner />}</Tool>)}
          </ToolBlock>
        ))}
      </Tools>
      <Overlay>{'User Perspective\n(16) Collection | Alpha'}</Overlay>
      <NavCol>
        <Gizmo viewBox="1026 145 144 135">
          <circle cx="1096" cy="188" r="12" fill="none" stroke="#a33b48" strokeWidth="1.600" />
          <circle cx="1098" cy="262" r="12.500" fill="#38495e" stroke="#2f6fb8" strokeWidth="1.600" />
          <circle cx="1042" cy="214" r="13" fill="#4f6530" stroke="#83bd17" strokeWidth="1.800" />
          <path d="M1098 213V165" stroke="#3d7fcf" strokeWidth="2.500" /><path d="M1098 213l55-.5" stroke="#75b01c" strokeWidth="2.500" /><path d="M1098 213l1 28" stroke="#d8394f" strokeWidth="2.500" />
          <circle cx="1098" cy="165" r="14.500" fill="#2f84e3" /><text x="1098" y="171" fill="#0d2036">Z</text>
          <circle cx="1099" cy="241" r="14.500" fill="#ff3352" /><text x="1099" y="247" fill="#4a0b15">X</text>
          <circle cx="1153" cy="213" r="13.500" fill="#75b01c" /><text x="1153" y="219" fill="#1b2a04">Y</text>
        </Gizmo>
        {navGlyphs.map((g, i) => <NavBtn key={i}><Svg $s={28} viewBox="0 0 26 26">{g}</Svg></NavBtn>)}
      </NavCol>
      <SideTab $mt={25}><Arrow /></SideTab>
    </VBody>
    <Edge $c="#4a4a4a" />
  </Viewport>
);

/* ---------- text editor ---------- */
const TextEd = styled.section`
  ${area}
  display: grid;
  grid-template-rows: 42px 1fr 41px;
  background: #232323;
`;
const TextBody = styled.div`display: flex; justify-content: flex-end;`;
const Foot = styled.div`background: #303030;`;
const TextEditor = () => (
  <TextEd>
    <Bar $h={42} $pb={1} $bg="#303030">
      <Group $ml={7}><Cell $w={49}><Icon n="textfile" s={25} /><Icon n="chev" s={16} /></Cell></Group>
      <Label $w={42} $ml={20}>View</Label><Label $w={38} $ml={27}>Text</Label><Label $w={92} $ml={26}>Templates</Label>
      <Group $ml={145}>
        <Cell $w={50}><Icon n="textfile" s={24} /><Icon n="chev" s={16} /></Cell>
        <Cell $w={98} $bg={C.gray} $gap={15}><Icon n="plus" s={20} />New</Cell>
        <Cell $w={98} $bg={C.gray} $gap={7}><Icon n="folder" s={25} />Open</Cell>
      </Group>
      <Group $ml={377}>
        <Cell $w={31} $bg={C.blue}><Icon n="linenum" s={25} /></Cell>
        <Cell $w={32} $bg={C.gray}><Icon n="wrap" s={24} /></Cell>
        <Cell $w={32} $bg="#35507c"><Icon n="syntax" s={24} /></Cell>
      </Group>
    </Bar>
    <TextBody><SideTab $mt={24}><Arrow /></SideTab></TextBody>
    <Foot />
    <Edge $c="#3b3b3b" />
  </TextEd>
);

/* ---------- node editor ---------- */
const OX = 1188;
const OY = 43;
const NodeEd = styled.section`
  ${area}
  border-radius: 7px 0 0 7px;
  background: #1d1d1d;
`;
const Links = styled.svg`
  position: absolute;
  inset: 0;
  width: 1632px;
  height: 1171px;
  fill: none;
  stroke-width: 1.7;
`;
const NodeBox = styled.div<{ $x: number; $y: number; $w?: number }>`
  position: absolute;
  left: ${p => p.$x - OX}px;
  top: ${p => p.$y - OY - 0.7}px;
  width: ${p => p.$w ?? 123.3}px;
  font-size: 10.150px;
  text-shadow: 0 1px 1px rgba(0, 0, 0, 0.4);
`;
const Time = styled.div`
  position: absolute;
  left: 0;
  top: -20px;
  font-size: 13px;
  line-height: 14px;
  color: #fff;
  text-shadow: none;
`;
const Head = styled.div<{ $cut?: boolean }>`
  height: 17px;
  background: #83314a;
  border-radius: ${p => (p.$cut ? '0 3px 0 0' : '3px 3px 0 0')};
  display: flex;
  align-items: center;
  padding: ${p => (p.$cut ? '0 5px 0 0' : '0 5px 0 7px')};
  gap: 4px;
  white-space: nowrap;
`;
const Title = styled.span`flex: 1; min-width: 0; margin: -1px -6px 0 0;`;
const Body = styled.div<{ $bg?: string }>`
  background: ${p => p.$bg ?? '#303030'};
  border-radius: 0 0 3px 3px;
  padding: 2.500px 0 3px;
`;
const Shell = styled.div`
  border-radius: 3px;
  box-shadow: 0 0 0 1px rgba(14, 14, 14, 0.7), 0 3px 8px 1px rgba(0, 0, 0, 0.5);
`;
const Row = styled.div<{ $right?: boolean; $h?: number; $g?: number; $cut?: boolean }>`
  position: relative;
  height: ${p => p.$h ?? 19}px;
  padding: ${p => (p.$cut ? '0 8.700px 0 0' : '0 8.700px')};
  display: flex;
  align-items: center;
  justify-content: ${p => (p.$right ? 'flex-end' : 'flex-start')};
  gap: ${p => p.$g ?? 1.5}px;
  white-space: nowrap;
`;
const Props = styled.div<{ $pt?: number }>`
  display: flex;
  flex-direction: column;
  gap: 3px;
  padding-top: ${p => p.$pt ?? 4.5}px;
`;
const Socket = styled.i<{ $c: string; $r?: boolean }>`
  position: absolute;
  top: 50%;
  ${p => (p.$r ? 'right' : 'left')}: -5px;
  margin-top: -4.500px;
  width: 9px;
  height: 9px;
  border-radius: 50%;
  background: ${p => p.$c};
  border: 1px solid #8a8a8a;
`;
const TriBox = styled.span<{ $bg?: string; $w?: number }>`
  width: ${p => p.$w ?? 16}px;
  height: 16px;
  border-radius: 3px;
  border: 1px solid ${C.line};
  background: ${p => p.$bg ?? C.dark};
  display: grid;
  place-items: center;
  flex: none;
`;
const Tri = ({ up }: { up?: boolean }) => <Svg $s={8} viewBox="0 0 8 8"><path stroke="none" fill="#fff" d={up ? 'M.5 6.500h7L4 1z' : 'M.5 1h7L4 7z'} /></Svg>;
const Field = styled.div<{ $dark?: boolean; $blue?: boolean; $w?: number; $pad?: string; $mid?: boolean; $r?: string; $ln?: boolean }>`
  height: 16px;
  ${p => (p.$w ? `width: ${p.$w}px; flex: none;` : 'flex: 1;')}
  min-width: 0;
  display: flex;
  align-items: center;
  justify-content: ${p => (p.$mid ? 'center' : 'space-between')};
  padding: ${p => p.$pad ?? '0'};
  border-radius: ${p => p.$r ?? '3px'};
  background: ${p => (p.$dark ? C.dark : p.$blue ? C.blue : C.gray)};
  border: 1px solid ${p => (p.$ln ? '#333' : C.line)};
  white-space: nowrap;
`;
const Joined = styled.div<{ $w?: number; $col?: boolean; $ln?: boolean }>`
  display: flex;
  flex-direction: ${p => (p.$col ? 'column' : 'row')};
  ${p => (p.$w ? `width: ${p.$w}px; flex: none;` : 'flex: 1;')}
  gap: 1px;
  background: #333;
  border: 1px solid ${p => (p.$ln ? '#333' : C.line)};
  border-radius: 3.500px;
  overflow: hidden;
`;
const Part = styled.div<{ $bg?: string; $f?: number; $w?: number; $h?: number; $jc?: string; $pad?: string }>`
  ${p => (p.$w ? `width: ${p.$w}px; flex: none;` : `flex: ${p.$f ?? 1};`)}
  height: ${p => p.$h ?? 14.5}px;
  min-height: ${p => p.$h ?? 14.5}px;
  min-width: 0;
  background: ${p => p.$bg ?? C.gray};
  display: flex;
  align-items: center;
  justify-content: ${p => p.$jc ?? 'center'};
  padding: ${p => p.$pad ?? '0'};
  white-space: nowrap;
`;
const Box = styled.span<{ $on?: boolean }>`
  width: 12px;
  height: 12px;
  border-radius: 2.500px;
  border: 1px solid ${C.line};
  background: ${p => (p.$on ? C.blue : C.gray)};
  display: grid;
  place-items: center;
  flex: none;
`;
const AxisRow = styled.div`
  position: relative;
  display: flex;
  padding: 1.500px 8.700px 1px;
  gap: 1px;
  height: 51.500px;
`;
const AxisKey = styled.div`
  display: flex;
  flex-direction: column;
  gap: 4px;
`;
const TopSocket = styled(Socket)`top: 9.500px;`;
const Halves = styled.div`display: flex; gap: 1px;`;
const Lead = styled.span`width: 21.500px; flex: none;`;
const Faint = styled.span`color: #5a5a5a;`;
const Soft = styled.span`color: #dcdcf4;`;
const MonoLine = styled.div`height: 18px; padding-left: 9px; display: flex; align-items: center; white-space: nowrap;`;

const Small = ({ n, s = 8 }: { n: 'chev' | 'check'; s?: number }) => <Icon n={n} s={s} />;
const Out = ({ c, children }: { c: string; children: React.ReactNode }) => (
  <Row $right><span>{children}</span><TriBox><Tri /></TriBox><Socket $c={c} $r /></Row>
);
const In = ({ c, children }: { c: string; children: React.ReactNode }) => <Row>{children}<Socket $c={c} /></Row>;
const Num = ({ c, l, v }: { c?: string; l: string; v: string }) => (
  <Row $h={c ? 19 : 18}><Field $pad="0 11.500px 0 12px"><span>{l}</span><span>{v}</span></Field>{c && <Socket $c={c} />}</Row>
);
const Pick = ({ l, pre, w }: { l: string; pre?: string; w?: number }) => (
  <Row $h={18} $g={pre ? 3 : 0}>{pre}<Grow /><Field $dark $w={w ?? 105.9} $pad="0 1px 0 6px">{l}<Small n="chev" s={10} /></Field></Row>
);
const Chk = ({ on, l }: { on?: boolean; l: string }) => <Row $h={18} $g={3}><Box $on={on}>{on && <Small n="check" s={8.5} />}</Box>{l}</Row>;
const Btn = ({ l, blue }: { l: string; blue?: boolean }) => <Row $h={18}><Field $mid $blue={blue}>{l}</Field></Row>;
const Two = ({ a, b }: { a: string; b: string }) => <Row $h={18}><Joined><Part $bg={C.blue}>{a}</Part><Part>{b}</Part></Joined></Row>;
const PlugIn = ({ c, l }: { c: string; l: string }) => (
  <Row $g={2.5}>
    <TriBox $bg={C.gray}><Svg $s={13} viewBox="0 0 13 13"><path {...F} d="M3 2h3.500a3 3 0 0 1 0 7H3zM0 3.500h3.500V5H0zM0 6.500h3.500V8H0z" /><path {...D} d="M9 6c4-1 5 5 1 6H1" strokeWidth="1.200" /></Svg></TriBox>
    {l}<Socket $c={c} />
  </Row>
);
const Axis = () => <Svg $s={13} viewBox="0 0 13 13"><path d="M5.500 .5V7.500L1 12M5.500 7.500L12.500 7.800" strokeWidth="2.400" /></Svg>;
const mini: Record<string, React.ReactNode> = {
  screen: <><path {...F} d="M0 1h12v8.500H0zM2 11h8v1.500H2z" /><path d="M1.700 2.700h8.600V8H1.700z" stroke="#4772b3" strokeWidth=".9" fill="#fff" /></>,
  cursor: <path {...F} d="M1 1l11 4.500-5 1.500-2.500 5z" />,
  camera: <><path {...F} d="M0 3h3l1.500-2h3L9 3h3v9H0z" /><circle cx="6" cy="7.300" r="3" stroke="#4772b3" strokeWidth="1.200" fill="#fff" /><circle cx="6" cy="7.300" r="1" stroke="#4772b3" /></>,
  refresh: <path d="M1.500 6a4.700 4.700 0 0 1 9-1.500M11 1v3.700H7.500M10.500 6a4.700 4.700 0 0 1-9 1.500M1 11V7.500h3.500" strokeWidth="1.100" />,
  tri: <path d="M1.500 1.500h9L6 11z" strokeWidth="2" />,
  coll: <path d="M.5 1h11v3H.5zM1.500 4v8h9V4M4.500 7h3" strokeWidth="1.200" />,
  eye: <><path d="M.5 6.500C3 2 9 2 11.500 6.500 9 11 3 11 .5 6.500z" strokeWidth="1.200" /><circle cx="6" cy="6.500" r="2" {...F} /></>,
  link: <path d="M5 2.500C3 2 1 4 2 6M2 9c0 2 3 3 4 1.500M7 2c2-1.500 4 0 4 2M10.500 8c0 2-2 3-3.500 2.500" strokeDasharray="3 1" strokeWidth="1.200" />,
  snap: <><path d="M8 11H1V1h10v6" strokeWidth="1" /><circle cx="6" cy="5.500" r="2" {...F} /><path d="M8 8l4 4M12 9v3H9" /></>,
  object: <><rect x="3" y="3" width="6.500" height="6.500" {...F} /><path {...D} strokeWidth="1" d="M.5 3V.5H3M9 .5h2.500V3M11.500 9v2.500H9M3 11.500H.5V9" /></>,
  x: <path d="M2.500 2.500l7 7M9.500 2.500l-7 7" strokeWidth="1" />,
  align: <path d="M.5 1.500H7M.5 4.500h11M.5 7.500H6M.5 10.500h11" strokeWidth="1.200" />,
  win: <path d="M1 .5h10v11H1zM3 3h6" strokeWidth="1" opacity=".7" />,
  python: <path d="M4 4V2c0-1.500 4-1.500 4 0v3c0 1-4 1-4 2v3c0 1.500 4 1.500 4 0V9M4 4H2C.5 4 .5 8 2 8h2M8 8h2c1.500 0 1.500-4 0-4H8" strokeWidth="1" opacity=".75" />,
  lines: <path d="M.5 1.500h11M.5 3.800h11M.5 6.100h11M.5 8.400h11M.5 10.700h11" strokeWidth="1.100" opacity=".85" />,
  filter: <path d="M1 1.500h10L7.500 6v5L4.500 9V6z" strokeWidth="1.100" />,
  curve: <path d="M1 1.500h5c3 0 3 3 0 3.500s-3 4.500 0 4.500h5.500M9 7l2.700 2.500L9 12" strokeWidth="1.200" />,
  drops: <><path {...F} d="M3.500 1L6.500 7c1 5-7 5-6 0z" /><circle cx="8" cy="8.500" r="3" strokeWidth="1.100" /><circle cx="10" cy="2" r="1.600" {...F} /></>,
};
const Mini = ({ n, s = 12 }: { n: string; s?: number }) => <Svg $s={s} viewBox="0 0 12 12">{mini[n]}</Svg>;

interface NodeProps { x: number; y: number; w?: number; t?: string; title: string; bg?: string; cut?: boolean; mark?: React.ReactNode; children: React.ReactNode }
const Node = ({ x, y, w, t, title, bg, cut, mark = <Axis />, children }: NodeProps) => (
  <NodeBox $x={x} $y={y} $w={w}>
    {t && <Time>{t}</Time>}
    <Shell>
      <Head $cut={cut}>{!cut && <Svg $s={10} viewBox="0 0 24 24"><path d="M2 6l10 10L22 6" strokeWidth="2.400" /></Svg>}<Title>{title}</Title>{mark}</Head>
      <Body $bg={bg}>{children}</Body>
    </Shell>
  </NodeBox>
);
const SideArrow = styled.div`position: relative; width: 12px; margin-top: 25px;`;

const link = (x1: number, y1: number, x2: number, y2: number) => {
  const dx = Math.abs(x2 - x1);
  const slope = dx ? Math.abs((y2 - y1) / dx) : 9;
  const h = 0.5 * dx * Math.min(1, slope * 3.25);
  return `M${x1},${y1}C${x1 + h},${y1} ${x2 - h},${y2} ${x2},${y2}`;
};

const NodeLinks = () => (
  <Links viewBox={`${OX} ${OY} 1632 1171`}>
    <defs>
      <pattern id="dots" x="1192.500" y="123" width="88.530" height="88.570" patternUnits="userSpaceOnUse"><rect width="1.800" height="1.800" fill="#2b2b2b" /></pattern>
      <linearGradient id="mf" gradientUnits="userSpaceOnUse" x1="1643" y1="355" x2="1710" y2="510"><stop offset=".35" stopColor={C.mat} /><stop offset=".75" stopColor={C.field} /></linearGradient>
      <linearGradient id="vs" gradientUnits="userSpaceOnUse" x1="2414" y1="456" x2="2485" y2="783"><stop offset=".3" stopColor={C.vert} /><stop offset=".65" stopColor={C.str} /></linearGradient>
    </defs>
    <rect x="1188" y="43" width="1632" height="1171" fill="url(#dots)" stroke="none" />
    <path d="M1188,424C1213,483 1245,527 1277,528.500" stroke={C.curve} />
    <path d={link(1237, 643.5, 1277, 566.5)} stroke={C.str} />
    <path d={link(1401.5, 466, 1518.5, 417)} stroke={C.mat} />
    <path d={link(1398, 637, 1518.5, 436)} stroke={C.mat} />
    <path d={link(1377.5, 844, 1710, 523.5)} stroke={C.curve} />
    <path d={link(1643, 354.5, 1710, 504.5)} stroke="url(#mf)" />
    <path d={link(1834.5, 442, 1887.5, 535.5)} stroke={C.curve} />
    <path d={link(2011.5, 451.5, 2018.5, 298)} stroke="#5229cf" />
    <path d={link(2011.5, 451.5, 2078, 698)} stroke={C.surf} />
    <path d={link(2011.5, 451.5, 1898.5, 763.5)} stroke={C.surf} />
    <path d={link(2022.5, 698.5, 2078, 717)} stroke={C.vert} />
    <path d={link(2201.5, 557.5, 2290, 573.5)} stroke={C.vert} />
    <path d={link(2201.5, 576.5, 2290, 592.5)} stroke={C.str} />
    <path d={link(2201.5, 595.5, 2290, 611.5)} stroke={C.str} />
    <path d={link(2414, 456.5, 2603, 655.5)} stroke={C.vert} />
    <path d={link(2414, 456.5, 2485.5, 782.5)} stroke="url(#vs)" />
    <path d={link(2609, 741, 2664, 853.5)} stroke={C.str} />
  </Links>
);

const NodeEditor = () => (
  <NodeEd>
    <NodeLinks />
    <Node x={1189} y={615} w={48} cut title="nge" mark={<Svg $s={12} viewBox="0 0 12 12"><path d="M0 11.500L12 .5" strokeWidth="1.100" /></Svg>}>
      <Out c={C.str}>ge. 1</Out>
      <Props>
        <Row $h={18} $cut><Field $blue $r="0 3px 3px 0" $pad="0 0 0 1px">Float</Field></Row>
        <Row $h={18} $cut $g={1}><Field $blue $r="0" $w={4} /><Field $mid $r="0 3px 3px 0">Step</Field></Row>
      </Props>
      {['0.00', '1.00', '5'].map(v => <Row key={v} $cut><Field $r="0 3px 3px 0" $pad="0 11.500px 0 0"><span />{v}</Field></Row>)}
    </Node>
    <Node x={1278} y={437} t="4ms" title="Curve Zero-Twi…">
      <Out c={C.mat}>Matrix. 5</Out>
      <Props><Pick l="Track normal" /><Btn l="Join" blue /></Props>
      <In c={C.curve}>Curve. 1</In><Num c={C.str} l="Resolution" v="50" /><In c={C.str}>T. 1</In>
    </Node>
    <Node x={1274.3} y={608.3} t="0ms" title="Matrix In" mark={null}>
      <Out c={C.mat}>Matrices. 1</Out>
      <Props><Pick l="Axis Angle" /></Props>
      {['Location', 'Scale'].map(l => (
        <Row key={l} $g={8}><TriBox $bg={C.gray} $w={19}><Tri /></TriBox><Field $dark $pad="0 1px 0 6px">{l}<Small n="chev" s={10} /></Field><Socket $c={C.vert} /></Row>
      ))}
      <AxisRow>
        <AxisKey><TriBox $bg={C.blue} $w={21}><Tri up /></TriBox><span>A</span></AxisKey>
        <Joined $col>
          {[['X', '1.000'], ['Y', '0.000'], ['Z', '0.000']].map(([a, v]) => <Part key={a} $h={15.6} $jc="space-between" $pad="0 11px 0 12px"><span>{a}</span><span>{v}</span></Part>)}
        </Joined>
        <TopSocket $c={C.vert} />
      </AxisRow>
      <Num c={C.str} l="Angle" v="-90.000" />
    </Node>
    <Node x={1254} y={815} t="1ms" title="Bezier Input" bg="#008033">
      <Out c={C.curve}>Curves. 6</Out><Out c={C.vert}>ControlPoints</Out><Out c={C.mat}>Matrices</Out><Out c={C.str}>Tilt</Out><Out c={C.str}>Radius</Out>
      <Props>
        <Row $h={18}><Joined $ln><Part $w={15} $bg={C.blue}><Mini n="curve" /></Part><Part $w={15} $bg={C.blue}><Mini n="drops" /></Part><Part $jc="space-between" $pad="0 1px 0 3px"><Mini n="refresh" s={12} />Update N…</Part></Joined></Row>
        <Btn l="Get selection" />
        <Chk on l="Sort" /><Chk l="Apply matrices" /><Chk on l="Concatenate seg…" />
        {['BézierCurve', 'BézierCurve.001', 'BézierCurve.002', 'BézierCurve.003', 'BézierCurve.004', 'BézierCurve.005', '… 3 more items'].map(s => <MonoLine key={s}>{s}</MonoLine>)}
      </Props>
      <Props $pt={2} />
    </Node>
    <Node x={1519} y={326} t="0ms" title="Matrix Multiply">
      <Out c={C.mat}>C. 5</Out>
      <Props><Pick l="Multiply" /><Two a="Pre" b="Post" /></Props>
      <In c={C.mat}>A. 5</In><In c={C.mat}>B. 1</In><PlugIn c={C.mat} l="C" />
    </Node>
    <Node x={1711} y={413.3} t="0ms" title="Apply Field to C…">
      <Out c={C.curve}>Curve. 6</Out>
      <Props><Chk l="Use Control Points" /><Chk on l="Join" /></Props>
      <In c={C.field}>Field. 5</In><In c={C.curve}>Curve. 6</In><Num c={C.str} l="Coefficient" v="1.00" />
    </Node>
    <Node x={1888} y={423} t="0ms" title="Surface from C…">
      <Out c={C.surf}>Surface. 1</Out>
      <Props><MonoLine>Interpolation mode:</MonoLine><Pick l="Cubic" /><Btn l="Cyclic" /></Props>
      <In c={C.curve}>Curves. 6</In>
    </Node>
    <Node x={2019} y={169} t="0ms" title="Evaluate Surface">
      <Out c={C.vert}>Vertices</Out><Out c={C.str}>Edges</Out><Out c={C.str}>Faces</Out>
      <Props><MonoLine>Evaluate:</MonoLine><Two a="Grid" b="Explicit" /></Props>
      <In c={C.surf}>Surface. 1</In><Num c={C.str} l="Samples U" v="25" /><Num c={C.str} l="Samples V" v="25" />
    </Node>
    <Node x={2078.3} y={529} t="24ms" title="Voronoi on Surf…">
      <Out c={C.vert}>Vertices. 1</Out><Out c={C.str}>Edges. 1</Out><Out c={C.str}>Faces. 1</Out><Out c={C.vert}>UVVertices</Out>
      <Props><Pick pre="Mode:" l="UV Space" w={72} /><Chk on l="Make faces" /><Chk on l="Correct normals" /></Props>
      <In c={C.surf}>Surface. 1</In><In c={C.vert}>UVPoints. 1</In><Num c={C.str} l="Sides" v="10" />
    </Node>
    <Node x={1899} y={651} t="14ms" title="Populate Surface">
      <Out c={C.vert}>Vertices</Out><Out c={C.vert}>UVPoints. 1</Out>
      <Props $pt={6}><Pick pre="Dista…" l="Min. Dista…" w={72} /><Chk l="Proportional" /></Props>
      <In c={C.surf}>Surface. 1</In><PlugIn c={C.sfield} l="Field" />
      <Num c={C.str} l="Count" v="100" /><Num c={C.str} l="Min Dista…" v="0.03" /><Num c={C.str} l="Threshold" v="0.50" /><Num c={C.str} l="Seed" v="0" />
    </Node>
    <Node x={2290.5} y={427.7} t="2ms" title="Subdivide">
      <Out c={C.vert}>Vertices. 1</Out><Out c={C.str}>Edges</Out><Out c={C.str}>Faces</Out><Out c={C.str}>FaceData</Out>
      <Props $pt={7}>
        <Row $h={34}><Joined $col><Halves><Part>Show Old</Part><Part>Show New</Part></Halves><Part $h={15}>Show Options</Part></Joined></Row>
      </Props>
      <In c={C.vert}>Vertices. 1</In><In c={C.str}>Edges. 1</In><In c={C.str}>Faces. 1</In><In c={C.str}>FaceData</In><In c={C.str}>EdgeMask</In>
      <Num c={C.str} l="Number of …" v="7" /><Num c={C.str} l="Smooth" v="1.00" /><Num c={C.str} l="Fractal" v="0.00" /><Num c={C.str} l="Along no…" v="0.00" /><Num c={C.str} l="Seed" v="0" />
    </Node>
    <Node x={2604} y={453} t="0ms" title="Dupli Instancer" bg="#ff9933">
      <Out c={C.obj}>Objects</Out>
      <Props>
        <Row $h={18} $g={0}><Field $blue $ln $mid>Live</Field><Joined $ln $w={50}><Part $bg={C.blue}><Mini n="screen" /></Part><Part $bg={C.blue}><Mini n="cursor" /></Part><Part $bg={C.blue}><Mini n="camera" /></Part></Joined></Row>
        <Row $h={68}>
          <Joined $col $ln>
            <Halves><Part $bg="#1d1d1d" $jc="flex-start" $pad="0 3px" $h={15.5}><Lead><Mini n="tri" /></Lead>Alpha</Part><Part $w={15.5} $h={15.5}><Mini n="refresh" /></Part></Halves>
            <Part $h={32.5}>Select</Part>
            <Part $bg="#1d1d1d" $jc="flex-start" $pad="0 3px" $h={15.5}><Lead><Mini n="coll" /></Lead><Faint>Collection</Faint></Part>
          </Joined>
        </Row>
        <Row $h={18}><Joined $ln><Part $bg={C.blue}>Verts</Part><Part>Polys</Part></Joined></Row>
        <Row $h={18}>Child<Grow /><Joined $ln $w={49.5}><Part $bg={C.blue}><Mini n="eye" /></Part><Part><Mini n="link" /></Part><Part><Mini n="snap" /></Part></Joined></Row>
      </Props>
      <Row>child:<Grow /><Joined $ln $w={73}><Part $bg="#1d1d1d" $jc="space-between" $pad="0 3px"><Mini n="object" /><span>&nbsp; Torus</span><Mini n="x" s={11} /></Part></Joined><Socket $c={C.obj} /></Row>
      <In c={C.vert}>Vertices. 1</In>
    </Node>
    <Node x={2486} y={712.3} t="0ms" title="List Length">
      <Out c={C.str}>Length. 1</Out>
      <Props><Num l="level" v="1" /></Props>
      <In c={C.str}>Data. 1</In>
    </Node>
    <Node x={2664.3} y={720.3} t="0ms" title="Stethoscope MK2" bg="#8080ff" mark={<Svg $s={13} viewBox="0 0 13 13"><path d="M1 .5v12M3 3h10M3 5.500h10M3 8h10" strokeDasharray="1.500 1" strokeWidth="1" opacity=".8" /></Svg>}>
      <Props $pt={3}>
        <Row $h={18} $g={4.5}><Joined $ln $w={17}><Part $bg={C.blue}><Mini n="screen" /></Part></Joined><Joined $ln><Part $w={16} $bg={C.blue}><Mini n="align" /></Part><Part $w={15.5}><Mini n="win" /></Part><Part $w={15.5}><Mini n="python" /></Part><Part $bg="#fafafa" /></Joined></Row>
        <Row $h={18}><Joined $ln><Part $jc="space-between" $pad="0 12px 0 13px"><span>roun…</span><span>3</span></Part><Part $w={16}><Mini n="lines" /></Part><Part $w={16}><Mini n="filter" /></Part></Joined></Row>
        <Row $h={18}><Joined $ln><Part $jc="flex-end" $pad="0 12px">60</Part><Part $jc="space-between" $pad="0 12px 0 13px"><span>d…</span><span>5</span></Part></Joined></Row>
        <Row $h={18}><Soft>input has 1 elements</Soft></Row>
        <Row $h={18}><Field $ln $mid>view_by_element</Field></Row>
      </Props>
      <Row><Soft>Data. 1</Soft><Socket $c={C.str} /></Row>
    </Node>

    <Bar $h={39}>
      <Group $ml={12}><Cell $w={49}><Icon n="dna" /><Icon n="chev" s={16} /></Cell></Group>
      <Label $w={42} $ml={22}>View</Label><Label $w={56} $ml={25}>Select</Label><Label $w={36} $ml={24}>Add</Label><Label $w={47} $ml={25}>Node</Label>
      <Group $ml={110}>
        <Cell $w={50}><Icon n="dna" /><Icon n="chev" s={16} /></Cell>
        <Cell $w={211} $bg="#1d1d1d">Sverchok Nodes.003</Cell>
        <Cell $w={32} $bg={C.blue}><Icon n="shield" s={25} /></Cell>
        <Cell $w={33} $bg={C.gray}><Icon n="copy" s={25} /></Cell>
        <Cell $w={32} $bg={C.gray}><Icon n="x" s={20} /></Cell>
      </Group>
      <Label $w={26} $ml={11}><Icon n="pin" s={25} /></Label>
      <Group $ml={29}><Cell $w={31} $bg={C.gray}><Icon n="magnet" /></Cell><Cell $w={52}><Icon n="gridsnap" /><Icon n="chev" s={16} /></Cell></Group>
      <Group $ml={9}><Cell $w={31} $bg={C.blue}><Icon n="overlay" s={25} /></Cell><Cell $w={33}><Icon n="chev" s={16} /></Cell></Group>
      <Label $w={56} $ml={8}>v1.3.0</Label>
      <Label $w={26} $ml={21}><Icon n="dna" /></Label>
      <Label $w={140} $ml={34} $ls={4.7}>EXAMPLES</Label>
      <Group $ml={38}><Cell $w={53} $bg={C.gray}><Icon n="gears" s={28} /></Cell><Cell $w={54} $bg={C.gray}><Icon n="console" s={24} /></Cell></Group>
      <Label $w={22} $ml={13}><Icon n="check" s={20} /></Label>
      <Label $w={98} $ml={16}>Processing</Label>
    </Bar>
    <SideArrow><SideTab $mt={0} $left><Arrow right /></SideTab></SideArrow>
    <Edge $c="#2d2d2d" />
  </NodeEd>
);

export default function App() {
  return (
    <Screen>
      <Global />
      <Top>
        <Menus>
          <Icon n="logo" s={30} />
          <Label $w={31} $ml={12}>File</Label><Label $w={32} $ml={26}>Edit</Label><Label $w={61} $ml={26}>Render</Label>
          <Label $w={70} $ml={26}>Window</Label><Label $w={41} $ml={26}>Help</Label>
        </Menus>
        <Tabs>
          {tabs.map(([n, w]) => <Tab key={n} $w={w} $on={n === 'Sverchok'} $hover={n === 'Animation'}>{n}</Tab>)}
          <Tab $w={32}><Icon n="plus" s={20} /></Tab>
        </Tabs>
      </Top>
      <Main>
        <LeftCol><View3D /><TextEditor /></LeftCol>
        <NodeEditor />
      </Main>
    </Screen>
  );
}
